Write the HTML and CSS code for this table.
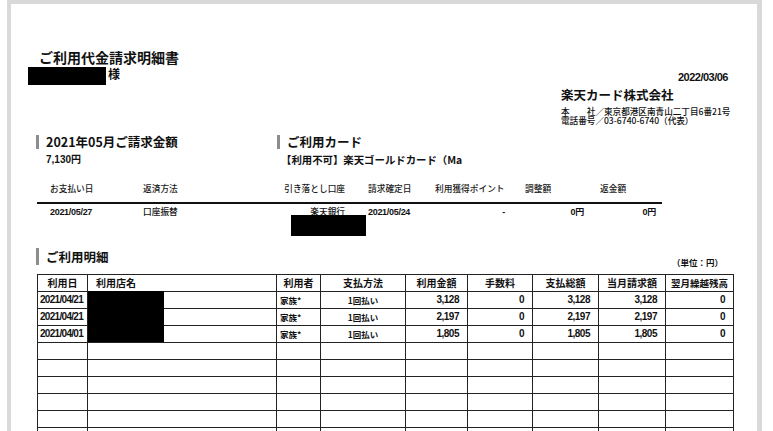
FILE: index.html
```html
<!DOCTYPE html>
<html lang="ja">
<head>
<meta charset="utf-8">
<title>ご利用代金請求明細書</title>
<link rel="stylesheet" href="styles.css">
</head>
<body>
<div class="frame">
  <header class="top">
    <div class="top-left">
      <h1 class="title">ご利用代金請求明細書</h1>
      <div class="addressee"><span class="redact name-redact"></span><span class="sama">様</span></div>
    </div>
    <div class="top-right">
      <div class="date num">2022/03/06</div>
      <div class="company">楽天カード株式会社</div>
      <div class="addr">本　　社／東京都港区南青山二丁目6番21号</div>
      <div class="addr">電話番号／03-6740-6740（代表）</div>
    </div>
  </header>

  <section class="summary">
    <div class="sum-block amount">
      <h2 class="sec-title">2021年05月ご請求金額</h2>
      <div class="sum-value amount-value">7,130円</div>
    </div>
    <div class="sum-block card">
      <h2 class="sec-title">ご利用カード</h2>
      <div class="sum-value card-value">【利用不可】楽天ゴールドカード（Ma</div>
    </div>
  </section>

  <div class="pay">
    <div class="h c1">お支払い日</div>
    <div class="h c2">返済方法</div>
    <div class="h c3">引き落とし口座</div>
    <div class="h c4">請求確定日</div>
    <div class="h c5">利用獲得ポイント</div>
    <div class="h c6">調整額</div>
    <div class="h c7">返金額</div>

    <div class="d c1 num">2021/05/27</div>
    <div class="d c2">口座振替</div>
    <div class="d c3">楽天銀行<span class="redact bank-redact"></span></div>
    <div class="d c4 num">2021/05/24</div>
    <div class="d c5 num">-</div>
    <div class="d c6 num">0円</div>
    <div class="d c7 num">0円</div>
  </div>

  <div class="detail-head">
    <h2 class="sec-title tall">ご利用明細</h2>
    <span class="unit">（単位：円）</span>
  </div>

  <div class="detail-wrap">
    <table class="detail">
      <colgroup>
        <col class="w-date"><col class="w-shop"><col class="w-user"><col class="w-method">
        <col class="w-amt"><col class="w-fee"><col class="w-total"><col class="w-month"><col class="w-next">
      </colgroup>
      <thead>
        <tr>
          <th>利用日</th><th class="shop">利用店名</th><th>利用者</th><th>支払方法</th>
          <th>利用金額</th><th>手数料</th><th>支払総額</th><th>当月請求額</th><th class="narrow">翌月繰越残高</th>
        </tr>
      </thead>
      <tbody>
        <tr>
          <td class="date-cell num">2021/04/21</td><td></td><td class="user">家族*</td><td class="method">1回払い</td>
          <td class="n num">3,128</td><td class="n num">0</td><td class="n num">3,128</td><td class="n num">3,128</td><td class="n num">0</td>
        </tr>
        <tr>
          <td class="date-cell num">2021/04/21</td><td></td><td class="user">家族*</td><td class="method">1回払い</td>
          <td class="n num">2,197</td><td class="n num">0</td><td class="n num">2,197</td><td class="n num">2,197</td><td class="n num">0</td>
        </tr>
        <tr>
          <td class="date-cell num">2021/04/01</td><td></td><td class="user">家族*</td><td class="method">1回払い</td>
          <td class="n num">1,805</td><td class="n num">0</td><td class="n num">1,805</td><td class="n num">1,805</td><td class="n num">0</td>
        </tr>
        <tr><td></td><td></td><td></td><td></td><td></td><td></td><td></td><td></td><td></td></tr>
        <tr><td></td><td></td><td></td><td></td><td></td><td></td><td></td><td></td><td></td></tr>
        <tr><td></td><td></td><td></td><td></td><td></td><td></td><td></td><td></td><td></td></tr>
        <tr><td></td><td></td><td></td><td></td><td></td><td></td><td></td><td></td><td></td></tr>
        <tr><td></td><td></td><td></td><td></td><td></td><td></td><td></td><td></td><td></td></tr>
        <tr><td></td><td></td><td></td><td></td><td></td><td></td><td></td><td></td><td></td></tr>
      </tbody>
    </table>
    <span class="redact shop-redact"></span>
  </div>
</div>
</body>
</html>
```
FILE: styles.css
```css
* { box-sizing: border-box; margin: 0; padding: 0; }

html, body {
  background: #fff;
  height: 431px;
  overflow: hidden;
}

body {
  font-family: "Noto Sans CJK JP", sans-serif;
  color: #111;
}

.num {
  font-family: "Liberation Sans", "Noto Sans CJK JP", sans-serif;
  letter-spacing: -0.4px;
}

.frame {
  margin-left: 7px;
  width: 755px;
  min-height: 431px;
  border-top: 4px solid #d9d9d9;
  border-left: 4px solid #d9d9d9;
  border-right: 5px solid #d9d9d9;
  background: #fff;
  padding: 0 24px 0 17px;
}

.redact { display: block; background: #000; }

/* header */
.top {
  display: flex;
  justify-content: space-between;
  align-items: flex-start;
  padding-top: 46px;
}
.title {
  font-size: 14px;
  line-height: 14px;
  font-weight: 700;
  margin-left: 11px;
}
.addressee {
  display: flex;
  align-items: flex-start;
  margin-top: 3px;
}
.name-redact { width: 78px; height: 18px; }
.sama {
  font-size: 12px;
  line-height: 14px;
  font-weight: 700;
  margin-left: 2px;
}
.top-right {
  width: 172px;
  margin-top: 21px;
}
.date {
  text-align: right;
  padding-right: 5px;
  font-size: 11px;
  line-height: 12px;
  font-weight: 700;
  letter-spacing: -0.5px;
}
.company {
  font-size: 12.5px;
  line-height: 13px;
  font-weight: 700;
  margin-top: 5px;
}
.addr {
  font-size: 8.6px;
  line-height: 9px;
  white-space: nowrap;
  font-weight: 500;
}
.company + .addr { margin-top: 6px; }

/* summary */
.summary {
  display: flex;
  margin-top: 10px;
  margin-left: 8px;
}
.sum-block.amount { width: 241px; }
.sec-title {
  font-size: 12.5px;
  line-height: 14px;
  font-weight: 700;
  border-left: 3px solid #8c8c8c;
  padding-left: 7px;
}
.sec-title.tall { line-height: 17px; }
.sum-value {
  font-weight: 700;
  line-height: 10px;
  margin-top: 6px;
  white-space: nowrap;
}
.amount-value {
  font-family: "Liberation Sans", "Noto Sans CJK JP", sans-serif;
  font-size: 10px;
  padding-left: 10px;
}
.card-value {
  font-size: 10.4px;
  padding-left: 4px;
}

/* payment grid */
.pay {
  display: grid;
  grid-template-columns: 106px 107px 118px 67px 90px 70px 67px;
  width: 625px;
  margin: 18px 0 0 9px;
}
.pay .h {
  font-size: 8.7px;
  line-height: 12px;
  height: 21px;
  border-bottom: 2px solid #111;
  color: #1a1a1a;
  font-weight: 500;
  white-space: nowrap;
}
.pay .d {
  font-size: 8.7px;
  line-height: 12px;
  padding-top: 2px;
  font-weight: 500;
  white-space: nowrap;
  color: #111;
}
.pay .d.num { font-size: 9px; font-weight: 700; letter-spacing: -0.3px; }
.pay .c1 { padding-left: 13px; }
.pay .c3 { text-align: right; padding-right: 23px; position: relative; }
.pay .d.c5 { text-align: right; padding-right: 20px; }
.pay .d.c6 { text-align: right; padding-right: 11px; }
.pay .h.c7 { padding-left: 5px; }
.pay .d.c7 { text-align: right; padding-right: 6px; }
.bank-redact {
  position: absolute;
  left: 41px;
  top: 11px;
  width: 75px;
  height: 21px;
}

/* detail */
.detail-head {
  display: flex;
  justify-content: space-between;
  align-items: flex-start;
  width: 696px;
  margin: 30px 0 0 8px;
}
.unit {
  font-size: 8.5px;
  line-height: 10px;
  font-weight: 700;
  margin-top: 9px;
  padding-right: 9px;
}
.detail-wrap {
  position: relative;
  margin: 7px 0 0 9px;
  width: 696px;
}
.detail {
  border-collapse: collapse;
  table-layout: fixed;
  width: 696px;
}
.w-date { width: 50px; }
.w-shop { width: 189px; }
.w-user { width: 44px; }
.w-method { width: 85px; }
.w-amt { width: 62px; }
.w-fee { width: 65px; }
.w-total { width: 66px; }
.w-month { width: 67px; }
.w-next { width: 68px; }

.detail tr { height: 17px; }
.detail th, .detail td {
  border: 1px solid #222;
  padding: 0;
  height: 17px;
  white-space: nowrap;
  overflow: hidden;
}
.detail th {
  font-size: 10px;
  line-height: 14px;
  font-weight: 700;
  text-align: center;
}
.detail th.shop { text-align: left; padding-left: 8px; }
.detail th.narrow { font-size: 9.5px; }
.detail td {
  font-size: 9px;
  line-height: 14px;
  font-weight: 700;
}
.detail td.num { font-size: 10px; letter-spacing: -0.5px; }
.detail td.date-cell { padding-left: 2px; letter-spacing: -0.7px; }
.detail td.user { padding-left: 3px; font-size: 8.5px; }
.detail td.method { text-align: center; font-size: 8.5px; }
.detail td.n { text-align: right; padding-right: 8px; }

.shop-redact {
  position: absolute;
  left: 51px;
  top: 17px;
  width: 76px;
  height: 51px;
}
```
